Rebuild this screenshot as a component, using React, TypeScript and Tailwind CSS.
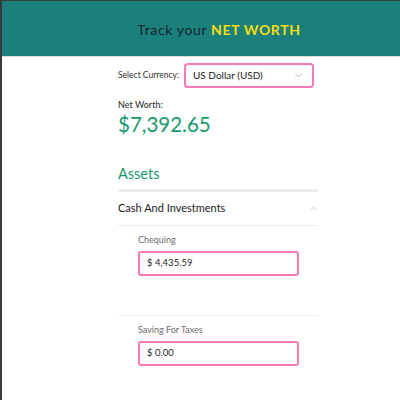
import { ChevronDown, ChevronUp } from "lucide-react";

const font = { fontFamily: 'Lato, "Noto Sans", sans-serif' };

function MoneyField({ label, value }: { label: string; value: string }) {
  return (
    <div className="pl-[20px] pt-[8px]">
      <p className="text-[9px] leading-[12px] text-[#6b6b6b]">{label}</p>
      <div className="mt-[5px] flex h-[25px] w-[161px] items-center rounded-[3px] border-2 border-[#f57ab8] px-[7px] text-[9.5px] text-[#1f1f1f]">
        {value}
      </div>
    </div>
  );
}

export default function App() {
  return (
    <div
      className="min-h-[400px] w-[400px] border-t border-l-2 border-[#3a3a3a] bg-white"
      style={font}
    >
      {/* Header */}
      <header className="flex h-[56px] items-center border-b border-[#dcdcdc] bg-[#1b807c]">
        <div className="ml-[116px] w-[202px] pt-[2px] text-center text-[14px] tracking-[0.045em] text-[#18232e]">
          Track your <span className="font-bold text-[#f6dc10]">NET WORTH</span>
        </div>
      </header>

      <main className="ml-[116px] w-[200px]">
        {/* Currency */}
        <div className="mt-[6px] flex items-center">
          <span className="w-[66px] whitespace-nowrap text-[8.5px] text-[#333]">Select Currency:</span>
          <div className="flex h-[25px] w-[130px] items-center justify-between rounded-[4px] border-2 border-[#f57ab8] pl-[7px] pr-[8px] text-[10px] text-[#222]">
            US Dollar (USD)
            <ChevronDown className="size-[11px] text-[#888]" strokeWidth={1.5} />
          </div>
        </div>

        {/* Net worth */}
        <p className="mt-[11px] text-[9px] font-medium leading-[12px] text-[#333]">Net Worth:</p>
        <p className="mt-[1px] text-[20.5px] leading-[24px] text-[#159a6b]">$7,392.65</p>

        {/* Assets */}
        <h2 className="mt-[29px] text-[14.5px] leading-[18px] text-[#159a6b]">Assets</h2>
        <div className="mt-[6px] h-[3px] bg-[#ececec]" />

        <div className="flex h-[34px] items-center justify-between border-b border-[#ececec]">
          <span className="text-[11px] text-[#222]">Cash And Investments</span>
          <ChevronUp className="mr-[-1px] size-[11px] text-[#aaa]" strokeWidth={1.5} />
        </div>

        <div className="h-[90px] border-b border-[#f0f0f0]">
          <MoneyField label="Chequing" value="$ 4,435.59" />
        </div>
        <MoneyField label="Saving For Taxes" value="$ 0.00" />
      </main>
    </div>
  );
}
